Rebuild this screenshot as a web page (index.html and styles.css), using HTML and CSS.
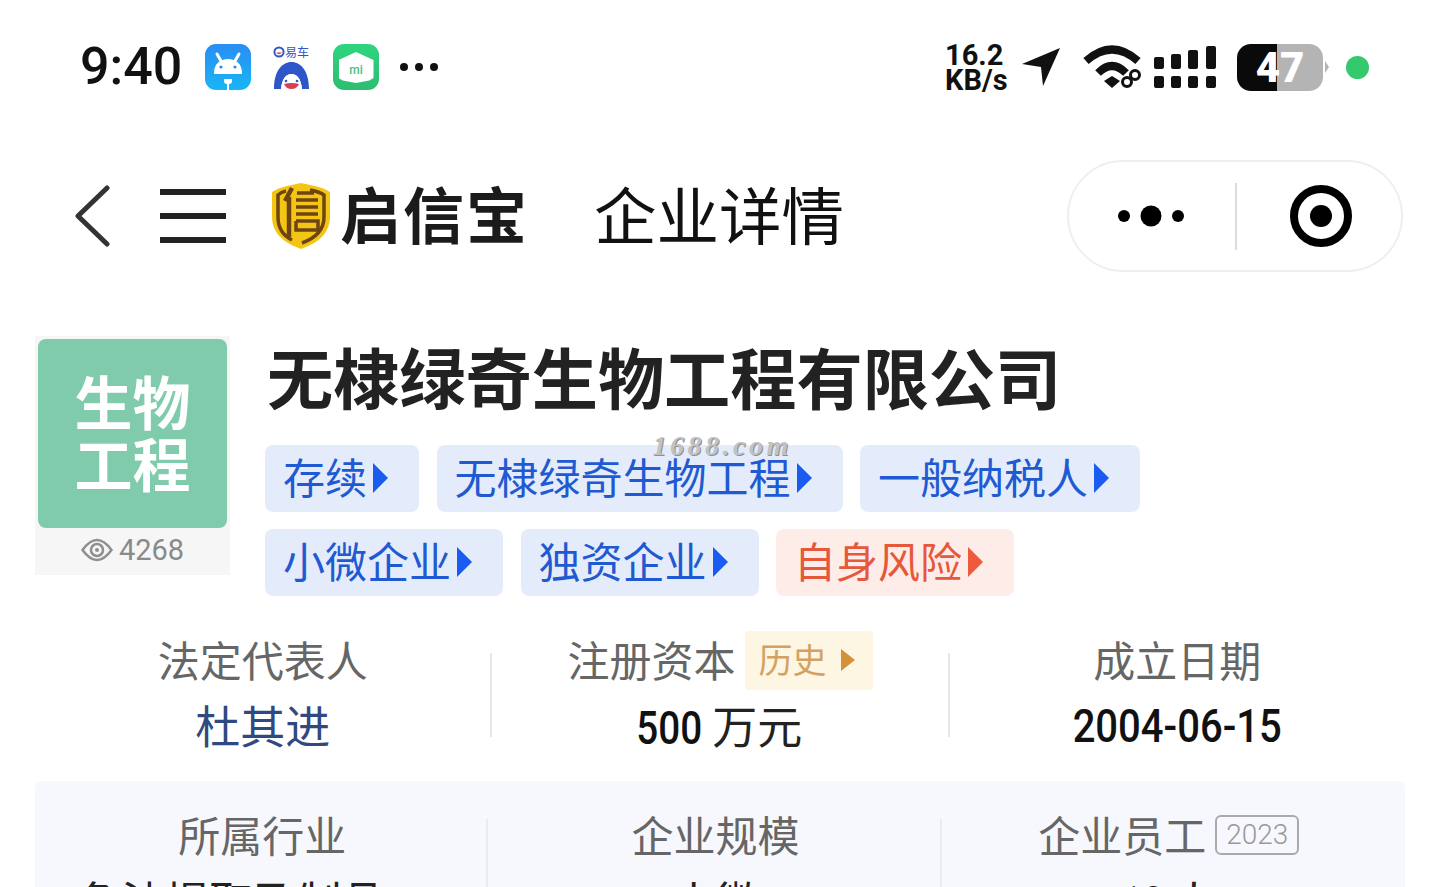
FILE: index.html
```html
<!DOCTYPE html>
<html lang="zh-CN">

<head>
    <meta charset="UTF-8">
    <meta name="viewport" content="width=device-width, initial-scale=1.0">
    <title>企业详情</title>
    <link rel="stylesheet" href="styles.css">
</head>

<body>
    <header class="status_bar">
        <div class="status_left">
            <span class="time">9:40</span>

            <svg class="app_icon" viewBox="0 0 46 46">
                <defs>
                    <linearGradient id="azul" x1="0" y1="0" x2="0" y2="1">
                        <stop offset="0" stop-color="#2a8df2" />
                        <stop offset="1" stop-color="#19b6f6" />
                    </linearGradient>
                </defs>
                <rect width="46" height="46" rx="11" fill="url(#azul)" />
                <path d="M9 29 C9 20 15 15 23 15 C31 15 37 20 37 29 Q37 30 36 30 L10 30 Q9 30 9 29 Z" fill="#fff" />
                <path d="M12 10 L16 17 M34 10 L30 17" stroke="#fff" stroke-width="3" stroke-linecap="round" />
                <circle cx="16" cy="23" r="1.6" fill="#2a8df2" />
                <circle cx="30" cy="23" r="1.6" fill="#2a8df2" />
                <path d="M19 35 H27 V37 Q27 40 24 40 V46 H22 V40 Q19 40 19 37 Z" fill="#fff" />
            </svg>

            <div class="yiche">
                <div class="yiche_top">
                    <svg viewBox="0 0 12 12" width="12" height="12">
                        <circle cx="6" cy="6" r="4.6" fill="none" stroke="#3456c4" stroke-width="2" />
                        <path d="M3 6.5 Q6 10 9 6.5 Z" fill="#e23b4a" />
                    </svg>
                    <span>易车</span>
                </div>
                <svg viewBox="0 0 37 28" width="37" height="28">
                    <path d="M1 28 C1 10 9 1 18.500 1 C28 1 36 10 36 28 L29 28 C28 18 24 13 18.500 13 C13 13 9 18 8 28 Z" fill="#2f56c8" />
                    <path d="M8 28 C9 18 13 13 18.500 13 C24 13 28 18 29 28 Z" fill="#fff" />
                    <circle cx="13" cy="20" r="1.300" fill="#2f56c8" />
                    <circle cx="24" cy="20" r="1.300" fill="#2f56c8" />
                    <path d="M11 23 Q18.500 21 26 23 Q24 28 18.500 28 Q13 28 11 23 Z" fill="#d9404f" />
                </svg>
            </div>

            <div class="mi_icon">
                <div class="mi_house">mi</div>
            </div>

            <div class="status_dots"><span></span><span></span><span></span></div>
        </div>

        <div class="status_right">
            <div class="speed">16.2<br>KB/s</div>

            <svg class="arrow_icon" viewBox="0 0 40 40" width="40" height="40">
                <path d="M1 17 L39 1 L22 39 L20 20 Z" fill="#111" />
            </svg>

            <svg class="wifi_icon" viewBox="0 0 60 44" width="60" height="44">
                <path d="M3 16 Q29 -7 55 16" fill="none" stroke="#111" stroke-width="8" />
                <path d="M15 28 Q29 14 43 28" fill="none" stroke="#111" stroke-width="8" />
                <path d="M21 36 L29 31 L37 36 L29 43 Z" fill="#111" />
                <circle cx="44" cy="37" r="4.500" fill="#fff" stroke="#111" stroke-width="3" />
                <circle cx="52" cy="30" r="4.500" fill="#fff" stroke="#111" stroke-width="3" />
            </svg>

            <svg class="signal_icon" viewBox="0 0 62 42" width="62" height="42">
                <rect x="0" y="11" width="10" height="12" rx="2" />
                <rect x="17" y="8" width="10" height="15" rx="2" />
                <rect x="34" y="4" width="10" height="19" rx="2" />
                <rect x="52" y="0" width="10" height="23" rx="2" />
                <rect x="0" y="30" width="10" height="12" rx="2" />
                <rect x="17" y="30" width="10" height="12" rx="2" />
                <rect x="34" y="30" width="10" height="12" rx="2" />
                <rect x="52" y="30" width="10" height="12" rx="2" />
            </svg>

            <div class="battery">47</div>
            <div class="battery_tip"></div>
            <div class="green_dot"></div>
        </div>
    </header>

    <nav class="navbar">
        <svg class="back_icon" viewBox="0 0 35 62" width="35" height="62">
            <path d="M32 3 L3 31 L32 59" fill="none" stroke="#333" stroke-width="5" stroke-linecap="round" stroke-linejoin="round" />
        </svg>

        <div class="menu_icon"><span></span><span></span><span></span></div>

        <svg class="shield_icon" viewBox="0 0 58 66" width="58" height="66">
            <path d="M29 0 L43 3 Q52 5 58 9 V34 Q58 56 29 66 Q0 56 0 34 V9 Q6 5 15 3 Z" fill="#f4c614" />
            <path d="M14 8 Q9 9 6 12 V34 Q6 50 20 57 M30 60 Q52 52 52 34 V12 Q48 9 38 7" fill="none" stroke="#6e4412" stroke-width="3.500" />
            <path d="M20 5 L13 18 M17 14 V54" fill="none" stroke="#6e4412" stroke-width="4.500" />
            <path d="M25 10 H42 M24 17 H46 M24 24 H46 M24 31 H46 M24 38 H46 V47 H24 V38" fill="none" stroke="#6e4412" stroke-width="3.500" />
        </svg>

        <span class="brand">启信宝</span>
        <h1 class="page_title">企业详情</h1>

        <div class="capsule">
            <div class="capsule_part capsule_more">
                <svg viewBox="0 0 68 22" width="68" height="22">
                    <circle cx="6" cy="11" r="6" />
                    <circle cx="33" cy="11" r="10.500" />
                    <circle cx="60" cy="11" r="6" />
                </svg>
            </div>
            <div class="capsule_line"></div>
            <div class="capsule_part capsule_target">
                <svg viewBox="0 0 62 62" width="62" height="62">
                    <circle cx="31" cy="31" r="27" fill="none" stroke="#000" stroke-width="8" />
                    <circle cx="31" cy="31" r="11" />
                </svg>
            </div>
        </div>
    </nav>

    <section class="company">
        <div class="logo_box">
            <div class="logo_green">生物<br>工程</div>
            <div class="views">
                <svg viewBox="0 0 32 24" width="32" height="24">
                    <path d="M1.500 12 Q16 -8 30.500 12 Q16 32 1.500 12 Z" fill="none" stroke="#8f8f8f" stroke-width="2.500" />
                    <circle cx="16" cy="12" r="6" fill="none" stroke="#8f8f8f" stroke-width="2.500" />
                    <circle cx="16" cy="12" r="2" fill="#8f8f8f" />
                </svg>
                <span>4268</span>
            </div>
        </div>

        <div class="company_info">
            <h2 class="company_name">无棣绿奇生物工程有限公司</h2>
            <div class="tags">
                <div class="tag">存续<i></i></div>
                <div class="tag">无棣绿奇生物工程<i></i><span class="watermark">1688.com</span></div>
                <div class="tag">一般纳税人<i></i></div>
                <div class="tag">小微企业<i></i></div>
                <div class="tag">独资企业<i></i></div>
                <div class="tag tag_red">自身风险<i></i></div>
            </div>
        </div>
    </section>

    <section class="stats">
        <div class="stat">
            <div class="stat_label">法定代表人</div>
            <div class="stat_value stat_low link">杜其进</div>
        </div>
        <div class="stat_line"></div>
        <div class="stat">
            <div class="stat_label">注册资本<span class="history">历史<i></i></span></div>
            <div class="stat_value stat_low stat_money"><span class="digits digits_short">500</span> 万元</div>
        </div>
        <div class="stat_line"></div>
        <div class="stat">
            <div class="stat_label">成立日期</div>
            <div class="stat_value"><span class="digits digits_date">2004-06-15</span></div>
        </div>
    </section>

    <section class="stats stats_blue">
        <div class="stat">
            <div class="stat_label">所属行业</div>
            <div class="stat_value stat_industry">鱼油提取及制品</div>
        </div>
        <div class="stat_line"></div>
        <div class="stat">
            <div class="stat_label">企业规模</div>
            <div class="stat_value">小微</div>
        </div>
        <div class="stat_line"></div>
        <div class="stat">
            <div class="stat_label">企业员工<span class="year">2023</span></div>
            <div class="stat_value"><span class="digits digits_short">10</span> 人</div>
        </div>
    </section>
</body>

</html>
```

FILE: styles.css
```css
* {
    margin: 0;
    padding: 0;
    box-sizing: border-box;
    font-family: "Noto Sans CJK SC", "Roboto", sans-serif;
}

html,
body {
    width: 100%;
    height: 100%;
    overflow: hidden;
    background-color: #fff;
}

/* --------------------- Status bar --------------------- */

.status_bar {
    height: 134px;
    display: flex;
    align-items: center;
    justify-content: space-between;
    padding: 0 71px 0 80px;
}

.status_left,
.status_right {
    display: flex;
    align-items: center;
}

.time {
    width: 125px;
    font-family: "Roboto", sans-serif;
    font-size: 52px;
    font-weight: 500;
    line-height: 60px;
    color: #111;
}

.app_icon {
    width: 46px;
    height: 46px;
}

.yiche {
    width: 37px;
    margin-left: 22px;
    display: flex;
    flex-direction: column;
    row-gap: 3px;
}

.yiche svg {
    display: block;
}

.yiche_top {
    display: flex;
    align-items: center;
    height: 12px;
    color: #3456c4;
    font-size: 12px;
    line-height: 12px;
    white-space: nowrap;
}

.mi_icon {
    width: 46px;
    height: 46px;
    margin-left: 23px;
    border-radius: 11px;
    background: linear-gradient(#2fd57f, #2dbd72);
    display: flex;
    align-items: center;
    justify-content: center;
}

.mi_house {
    width: 35px;
    height: 31px;
    margin-top: 1px;
    background-color: #fff;
    clip-path: polygon(50% 0, 100% 26%, 100% 84%, 88% 92%, 50% 100%, 12% 92%, 0 84%, 0 26%);
    color: #45c485;
    font-family: "Roboto", sans-serif;
    font-size: 12px;
    font-weight: 500;
    line-height: 36px;
    text-align: center;
}

.status_dots {
    margin-left: 21px;
    display: flex;
    column-gap: 7px;
}

.status_dots span {
    width: 8px;
    height: 8px;
    border-radius: 50%;
    background-color: #111;
}

.speed {
    font-family: "Roboto", sans-serif;
    font-size: 29px;
    font-weight: 700;
    line-height: 25px;
    color: #111;
    width: 76px;
    margin-top: 2px;
}

.arrow_icon {
    margin-right: 22px;
}

.wifi_icon {
    margin-right: 11px;
}

.signal_icon {
    fill: #111;
    margin-right: 21px;
}

.battery {
    width: 86px;
    height: 47px;
    border-radius: 14px;
    background: linear-gradient(90deg, #0a0a0a 40px, #b4b4b4 40px);
    color: #fff;
    font-family: "Roboto", sans-serif;
    font-size: 42px;
    font-weight: 900;
    line-height: 48px;
    text-align: center;
}

.battery_tip {
    width: 0;
    height: 0;
    margin-left: 2px;
    border-top: 6px solid transparent;
    border-bottom: 6px solid transparent;
    border-left: 4px solid #b4b4b4;
}

.green_dot {
    width: 23px;
    height: 23px;
    margin-left: 17px;
    border-radius: 50%;
    background-color: #35c96e;
}

/* --------------------- Navbar --------------------- */

.navbar {
    height: 164px;
    display: flex;
    align-items: center;
    padding: 0 37px 0 75px;
}

.menu_icon {
    width: 66px;
    height: 54px;
    margin-left: 50px;
    display: flex;
    flex-direction: column;
    justify-content: space-between;
}

.menu_icon span {
    height: 6px;
    background-color: #222;
}

.shield_icon {
    margin-left: 46px;
}

.brand {
    margin: 0 0 6px 10px;
    font-size: 61px;
    font-weight: 700;
    line-height: 70px;
    letter-spacing: 2px;
    color: #1b1b1b;
}

.page_title {
    margin: 0 0 6px 65px;
    font-size: 62.5px;
    font-weight: 400;
    line-height: 70px;
    color: #111;
}

.capsule {
    margin-left: auto;
    width: 336px;
    height: 112px;
    border: 2px solid #efefef;
    border-radius: 56px;
    display: flex;
    align-items: center;
}

.capsule_part {
    display: flex;
    justify-content: center;
}

.capsule_more {
    width: 166px;
}

.capsule_target {
    flex: 1;
    padding-left: 4px;
}

.capsule_line {
    width: 2px;
    height: 67px;
    background-color: #dcdcdc;
}

/* --------------------- Empresa --------------------- */

.company {
    margin-top: 38px;
    padding-left: 35px;
    display: flex;
    align-items: flex-start;
}

.logo_box {
    width: 195px;
    height: 239px;
    padding: 3px;
    background-color: #f6f6f6;
}

.logo_green {
    height: 189px;
    border-radius: 8px;
    background-color: #7fcbab;
    color: #fff;
    font-size: 58px;
    font-weight: 700;
    line-height: 62px;
    text-align: center;
    padding-top: 30px;
}

.views {
    height: 44px;
    display: flex;
    align-items: center;
    justify-content: center;
    column-gap: 6px;
    color: #8a8a8a;
    font-size: 29px;
}

.views span {
    font-family: "Roboto", sans-serif;
}

.company_info {
    margin-left: 35px;
}

.company_name {
    margin: -5px 0 26px 2px;
    font-size: 66.2px;
    font-weight: 700;
    line-height: 88px;
    color: #222;
}

.tags {
    width: 900px;
    display: flex;
    flex-wrap: wrap;
    gap: 17px 17.5px;
}

.tag {
    position: relative;
    height: 67px;
    padding: 0 16px 7px 18px;
    border-radius: 8px;
    background-color: #e4ecfb;
    color: #1f5ad2;
    font-size: 42px;
    display: flex;
    align-items: center;
}

.tag i {
    width: 0;
    height: 0;
    margin: 6px 15px 0 6px;
    border-top: 15px solid transparent;
    border-bottom: 15px solid transparent;
    border-left: 15px solid #1a5cf0;
}

.tag_red {
    background-color: #fdece8;
    color: #e5583a;
}

.tag_red i {
    border-left-color: #ee5a3c;
}

.watermark {
    position: absolute;
    top: -12px;
    left: 216px;
    font-family: "Liberation Serif", serif;
    font-size: 28px;
    font-style: italic;
    font-weight: 700;
    line-height: 26px;
    letter-spacing: 3.5px;
    color: #c2c2c2;
    text-shadow: 1px 1px 0 #8f8f8f;
}

/* --------------------- Dados --------------------- */

.stats {
    margin: 34px 35px 0;
    height: 129px;
    display: flex;
    align-items: center;
}

.stat {
    flex: 1;
    display: flex;
    flex-direction: column;
    align-items: center;
}

.stat_label {
    height: 60px;
    padding-bottom: 4px;
    display: flex;
    align-items: center;
    color: #666;
    font-size: 42px;
}

.stat_value {
    height: 69px;
    color: #222;
    font-size: 44px;
    line-height: 66px;
    white-space: nowrap;
}

.stat_low {
    padding-top: 2px;
}

.stat_value.link {
    color: #30497f;
    font-size: 45px;
}

.stat_money {
    margin-right: 2px;
    font-size: 45px;
}

.digits {
    display: inline-block;
    font-family: "Roboto", sans-serif;
    font-size: 46px;
    font-weight: 500;
    color: #111;
}

.digits_short {
    margin: 0 -6px;
    transform: scaleX(0.84);
}

.digits_date {
    transform: scaleX(0.87);
}

.stat_line {
    width: 2px;
    height: 84px;
    background-color: #e8e8e8;
}

.history {
    width: 128px;
    height: 59px;
    margin: 4px 0 0 9px;
    padding: 0 0 4px 14px;
    border-radius: 4px;
    background-color: #fdf6e3;
    color: #d3a263;
    font-size: 34px;
    display: flex;
    align-items: center;
}

.history i {
    width: 0;
    height: 0;
    margin: 4px 0 0 14px;
    border-top: 11px solid transparent;
    border-bottom: 11px solid transparent;
    border-left: 14px solid #d3923a;
}

/* --------------------- Bloco azul --------------------- */

.stats_blue {
    margin-top: 22px;
    height: 106px;
    padding: 25px 12px 0 0;
    align-items: flex-start;
    overflow: hidden;
    border-radius: 6px 6px 0 0;
    background-color: #f6f8fd;
}

.stats_blue .stat {
    padding-left: 3px;
}

.stats_blue .stat_label {
    height: 58px;
}

.stats_blue .stat_value {
    margin-top: 3px;
}

.stats_blue .stat_industry {
    margin-right: 62px;
}

.stats_blue .stat_line {
    height: 120px;
    margin-top: 13px;
    background-color: #e9ebf0;
}

.year {
    height: 40px;
    margin: 4px 0 0 9px;
    padding: 0 9px;
    border: 2px solid #aaa;
    border-radius: 6px;
    color: #999;
    font-family: "Roboto", sans-serif;
    font-size: 28px;
    font-weight: 300;
    line-height: 36px;
}
```
